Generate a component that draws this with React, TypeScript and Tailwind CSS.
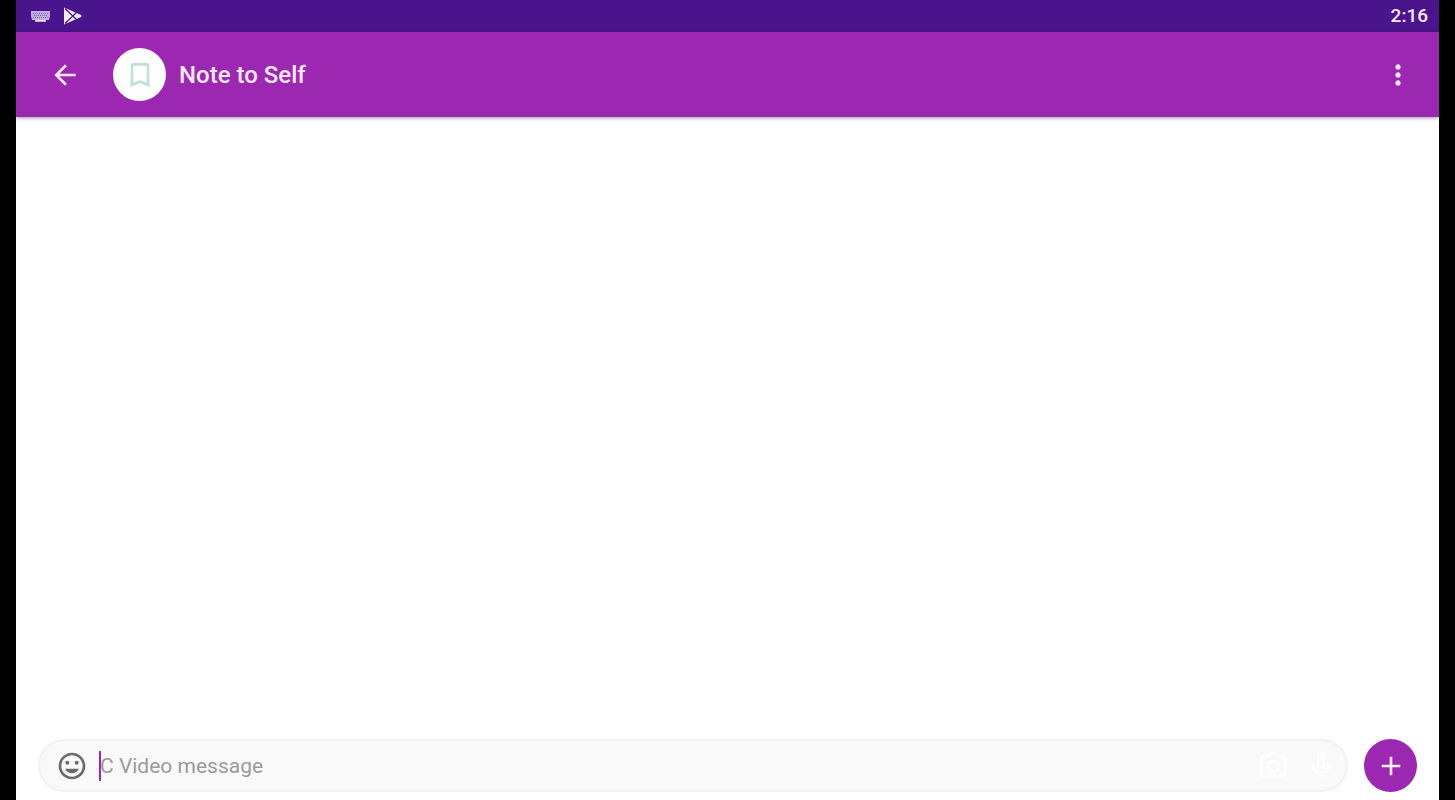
import type { ReactNode } from "react";

type IconProps = { className?: string; children: ReactNode };

function Icon({ className = "size-8", children }: IconProps) {
  return (
    <svg viewBox="0 0 24 24" fill="currentColor" aria-hidden="true" className={`shrink-0 ${className}`}>
      {children}
    </svg>
  );
}

const KEY_ROWS = [
  { y: 2, xs: [2, 4, 6, 8, 10, 12, 14, 16] },
  { y: 4, xs: [3, 5, 7, 9, 11, 13, 15] },
  { y: 6, xs: [2, 4, 6, 8, 10, 12, 14, 16] },
];

function KeyboardIcon() {
  return (
    <svg viewBox="0 0 19 11" aria-hidden="true" className="h-[11px] w-[19px]">
      <path d="M0 0h19v5l-1 4h-3v2H4V9H1L0 5z" fill="#c3aee2" />
      {KEY_ROWS.map((row) =>
        row.xs.map((x) => <rect key={`${row.y}-${x}`} x={x} y={row.y} width="1" height="1" fill="#7f5bb6" />),
      )}
      <path d="M5 9h9v1H5z" fill="#efe4fb" />
    </svg>
  );
}

function PlayIcon() {
  return (
    <svg viewBox="0 0 18 18" aria-hidden="true" className="size-[18px]">
      <path d="M0 0.5 L17 8 Q18 9 17 10 L0 17.5 Z" fill="#fbeeff" />
      <path d="M1 1.5 L13 13 M1 16.5 L13 5" stroke="#4a148c" strokeWidth="1.2" fill="none" />
    </svg>
  );
}

function StatusBar() {
  return (
    <div className="flex h-8 shrink-0 items-center bg-[#4a148c] pl-[15px] pr-[11px]">
      <KeyboardIcon />
      <div className="ml-3.5">
        <PlayIcon />
      </div>
      <time className="ml-auto text-[19px] leading-8 font-medium text-[#fbe6fd]">2:16</time>
    </div>
  );
}

function Header() {
  return (
    <header className="z-10 flex h-[85px] shrink-0 items-center bg-[#9c27b0] pr-[25px] pl-[33px] text-[#fde8ff] shadow-[0_1px_4px_rgba(0,0,0,0.4)]">
      <button type="button" aria-label="Back">
        <Icon>
          <path d="M20 11H7.83l5.59-5.59L12 4l-8 8 8 8 1.41-1.41L7.83 13H20v-2z" />
        </Icon>
      </button>
      <div className="ml-8 flex size-[53px] items-center justify-center rounded-full bg-white text-[#bfe0d9]">
        <Icon>
          <path d="M17 3H7c-1.1 0-2 .9-2 2v16l7-3 7 3V5c0-1.1-.9-2-2-2zm0 15-5-2.18L7 18V5h10v13z" />
        </Icon>
      </div>
      <h1 className="ml-[13px] text-2xl font-medium">Note to Self</h1>
      <button type="button" aria-label="More options" className="ml-auto">
        <Icon>
          <path d="M12 8c1.1 0 2-.9 2-2s-.9-2-2-2-2 .9-2 2 .9 2 2 2zm0 2c-1.1 0-2 .9-2 2s.9 2 2 2 2-.9 2-2-.9-2-2-2zm0 6c-1.1 0-2 .9-2 2s.9 2 2 2 2-.9 2-2-.9-2-2-2z" />
        </Icon>
      </button>
    </header>
  );
}

function Composer() {
  return (
    <form className="flex shrink-0 items-center gap-4 px-[22px] pb-2">
      <div className="flex h-[53px] min-w-0 flex-1 items-center rounded-full border-2 border-[#f1f1f1] bg-[#f9f9f9] pr-[9px] pl-4">
        <button type="button" aria-label="Emoji" className="text-[#6b6b6b]">
          <Icon>
            <circle cx="15.5" cy="9.5" r="1.5" />
            <circle cx="8.5" cy="9.5" r="1.5" />
            <path d="M11.99 2C6.47 2 2 6.48 2 12s4.47 10 9.99 10C17.52 22 22 17.52 22 12S17.52 2 11.99 2zM12 20c-4.42 0-8-3.58-8-8s3.58-8 8-8 8 3.58 8 8-3.58 8-8 8z" />
            <path d="M6.9 14h10.2c-.8 2.05-2.78 3.5-5.1 3.5S7.7 16.05 6.9 14z" />
          </Icon>
        </button>
        <div className="relative ml-[11px] min-w-0 flex-1">
          <input
            type="text"
            aria-label="Message"
            placeholder="C Video message"
            className="block w-full bg-transparent pl-px text-[21px] leading-8 text-[#333333] caret-[#9c27b0] outline-none placeholder:text-[#9b9b9b]"
          />
          <span className="absolute inset-y-px left-0 w-0.5 bg-[#9c27b0]" />
        </div>
        <div className="flex gap-4 text-white">
          <button type="button" aria-label="Camera">
            <Icon>
              <path d="M20 4h-3.17L15 2H9L7.17 4H4c-1.1 0-2 .9-2 2v13c0 1.1.9 2 2 2h16c1.1 0 2-.9 2-2V6c0-1.1-.9-2-2-2zm0 15H4V6h4.05l1.83-2h4.24l1.83 2H20v13zM12 7.5a5 5 0 1 0 0 10 5 5 0 0 0 0-10zm0 8a3 3 0 1 1 0-6 3 3 0 0 1 0 6z" />
            </Icon>
          </button>
          <button type="button" aria-label="Record voice message">
            <Icon>
              <path d="M12 14c1.66 0 2.99-1.34 2.99-3L15 5c0-1.66-1.34-3-3-3S9 3.34 9 5v6c0 1.66 1.34 3 3 3zm-1.2-9.1c0-.66.54-1.2 1.2-1.2s1.2.54 1.2 1.2l-.01 6.2c0 .66-.53 1.2-1.19 1.2s-1.2-.54-1.2-1.2V4.9zm6.5 6.1c0 3-2.54 5.1-5.3 5.1S6.7 14 6.7 11H5c0 3.41 2.72 6.23 6 6.72V21h2v-3.28c3.28-.48 6-3.3 6-6.72h-1.7z" />
            </Icon>
          </button>
        </div>
      </div>
      <button
        type="button"
        aria-label="Add attachment"
        className="flex size-[53px] shrink-0 items-center justify-center rounded-full bg-[#9c27b0] text-[#fdeeff]"
      >
        <Icon>
          <path d="M19 13h-6v6h-2v-6H5v-2h6V5h2v6h6v2z" />
        </Icon>
      </button>
    </form>
  );
}

export default function App() {
  return (
    <div className="h-screen bg-black px-4 font-['Roboto',sans-serif]">
      <div className="flex h-full flex-col overflow-hidden bg-white">
        <StatusBar />
        <Header />
        <main className="min-h-0 flex-1" />
        <Composer />
      </div>
    </div>
  );
}
